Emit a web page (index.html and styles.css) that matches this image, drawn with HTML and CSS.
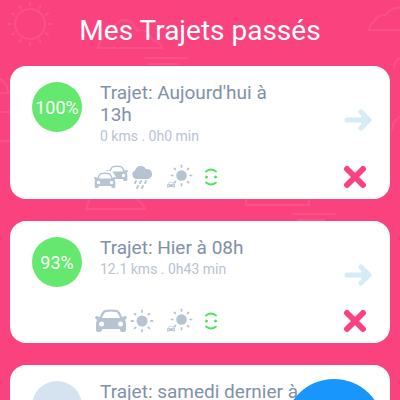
FILE: index.html
```html
<!DOCTYPE html>
<html lang="fr">
<head>
<meta charset="utf-8">
<meta name="viewport" content="width=device-width, initial-scale=1">
<title>Mes Trajets passés</title>
<link rel="stylesheet" href="styles.css">
</head>
<body>
<svg class="defs" aria-hidden="true">
  <symbol id="car" viewBox="0 0 32 24">
    <path fill="currentColor" fill-rule="evenodd" d="M0 9Q0 7 2 7L5 8Q7 2 10 1Q16 0 22 1Q25 2 27 8L30 7Q32 7 32 9L30 11Q31 13 31 15V21Q31 23 29 23H27Q25 23 25 20H7Q7 23 5 23H3Q1 23 1 21V15Q1 13 2 11ZM7 9H25Q23 3 21 3Q16 2 11 3Q9 3 7 9ZM6.500 12.500A2.500 2.500 0 1 0 6.500 17.500A2.500 2.500 0 1 0 6.500 12.500ZM25.500 12.500A2.500 2.500 0 1 0 25.500 17.500A2.500 2.500 0 1 0 25.500 12.500Z"/>
  </symbol>
  <symbol id="sun" viewBox="0 0 24 24">
    <circle cx="12" cy="12" r="5.500" fill="currentColor"/>
    <path fill="none" stroke="currentColor" stroke-width="1.800" stroke-linecap="round" d="M12 1.500V3M12 21V22.500M1.500 12H3M21 12H22.500M4.600 4.600L5.600 5.600M18.400 18.400L19.400 19.400M4.600 19.400L5.600 18.400M18.400 5.600L19.400 4.600"/>
  </symbol>
  <symbol id="suncar" viewBox="0 0 28 26">
    <use href="#sun" x="4" y="0" width="23" height="23"/>
    <use href="#car" x="1" y="18" width="8" height="6"/>
  </symbol>
  <symbol id="traffic" viewBox="0 0 34 24">
    <use href="#car" x="12" y="0" width="22" height="17"/>
    <path fill="#fff" d="M0 13L4 6H18L22 12V24H0Z"/>
    <use href="#car" x="0" y="7" width="22" height="17"/>
  </symbol>
  <symbol id="rain" viewBox="0 0 22 24">
    <path fill="currentColor" d="M5 14A4.500 4.500 0 0 1 4 5.500A6 6 0 0 1 15 4A5 5 0 0 1 17 14Z"/>
    <path fill="none" stroke="currentColor" stroke-width="1.800" stroke-linecap="round" d="M5 16L4 18M10 16L9 18M15 16L14 18M7 21L6 23M12 21L11 23"/>
  </symbol>
  <symbol id="face" viewBox="0 0 14 20">
    <path fill="none" stroke="currentColor" stroke-width="1.800" stroke-linecap="round" d="M2 4.500Q7 .5 12 4.500M2 15.500Q7 19.500 12 15.500"/>
    <circle cx="2.500" cy="10" r="1.500" fill="currentColor"/><circle cx="11.500" cy="10" r="1.500" fill="currentColor"/>
  </symbol>
  <symbol id="arrow" viewBox="0 0 28 24">
    <path fill="none" stroke="currentColor" stroke-width="5" stroke-linecap="round" stroke-linejoin="round" d="M3 12H24M17 4L25 12L17 20"/>
    <path fill="currentColor" d="M17 8L25 12L17 16Z"/>
  </symbol>
  <symbol id="cross" viewBox="0 0 24 24">
    <path fill="none" stroke="currentColor" stroke-width="6" stroke-linecap="round" d="M4 4L20 20M20 4L4 20"/>
  </symbol>
</svg>

<svg class="sky" viewBox="0 0 400 400" preserveAspectRatio="xMidYMin slice" aria-hidden="true">
  <circle cx="30" cy="24" r="15"/>
  <path d="M30 2V6M30 42V46M8 24H12M48 24H52M19 5L21 9M41 5L39 9M19 43L21 39M41 43L39 39M11 13L15 15M49 13L45 15M11 35L15 33M49 35L45 33"/>
  <path d="M98 48H162Q160 41 152 40Q147 27 137 31Q132 17 120 21Q112 25 112 35Q100 36 98 48ZM144 58H188M148 64H178"/>
  <path d="M400 8Q392 6 386 15Q377 14 374 22Q370 23 369 30H400M400 117Q393 120 392 130M400 58Q394 61 394 68"/>
  <path d="M0 79Q7 82 8 93H0M0 112H10M0 141H10M90 198L86 209H145Q143 203 136 199M246 199V205H309V199M292 214H336M297 220H325"/>
</svg>

<header class="header"><h1 class="title">Mes Trajets passés</h1></header>

<main class="trips">
  <article class="card">
    <div class="summary">
      <span class="score">100%</span>
      <div class="info">
        <h2 class="name">Trajet: Aujourd'hui à 13h</h2>
        <p class="meta">0 kms . 0h0 min</p>
      </div>
      <button class="open" type="button" aria-label="Ouvrir"><svg class="arrow"><use href="#arrow"/></svg></button>
    </div>
    <div class="conditions">
      <div class="icons">
        <svg class="wide"><use href="#traffic"/></svg>
        <svg class="weather"><use href="#rain"/></svg>
        <svg class="suncar"><use href="#suncar"/></svg>
        <svg class="face"><use href="#face"/></svg>
      </div>
      <button class="remove" type="button" aria-label="Supprimer"><svg class="cross"><use href="#cross"/></svg></button>
    </div>
  </article>

  <article class="card">
    <div class="summary">
      <span class="score">93%</span>
      <div class="info">
        <h2 class="name">Trajet: Hier à 08h</h2>
        <p class="meta">12.1 kms . 0h43 min</p>
      </div>
      <button class="open" type="button" aria-label="Ouvrir"><svg class="arrow"><use href="#arrow"/></svg></button>
    </div>
    <div class="conditions">
      <div class="icons">
        <svg class="wide"><use href="#car"/></svg>
        <svg class="weather"><use href="#sun"/></svg>
        <svg class="suncar"><use href="#suncar"/></svg>
        <svg class="face"><use href="#face"/></svg>
      </div>
      <button class="remove" type="button" aria-label="Supprimer"><svg class="cross"><use href="#cross"/></svg></button>
    </div>
  </article>

  <article class="card">
    <div class="summary">
      <span class="score pending"></span>
      <div class="info">
        <h2 class="name">Trajet: samedi dernier à</h2>
      </div>
    </div>
  </article>
</main>

<button class="fab" type="button" aria-label="Nouveau trajet"></button>
</body>
</html>
```
FILE: styles.css
```css
* {
  box-sizing: border-box;
}

html {
  height: 100%;
  overflow: hidden;
}

body {
  height: 100%;
  margin: 0;
  overflow: hidden;
  background: #fa437e;
  font-family: Roboto, "Liberation Sans", sans-serif;
}

button {
  padding: 0;
  border: 0;
  background: none;
  cursor: pointer;
}

svg {
  display: block;
}

.defs {
  position: absolute;
  width: 0;
  height: 0;
}

.sky {
  position: absolute;
  z-index: -1;
  top: 0;
  left: 0;
  width: 100%;
  height: 100%;
  fill: none;
  stroke: #fff;
  stroke-width: 2;
  stroke-opacity: 0.08;
}

.header {
  padding: 15px 10px 19px;
}

.title {
  margin: 0;
  color: #fff;
  font-size: 28px;
  font-weight: 400;
  line-height: 32px;
  text-align: center;
}

.trips {
  display: flex;
  flex-direction: column;
  gap: 22px;
  padding: 0 10px;
}

.card {
  padding: 16px 18px 7px 22px;
  border-radius: 16px;
  background: #fff;
}

.summary {
  display: flex;
  min-height: 53px;
}

.score {
  display: flex;
  flex: none;
  align-items: center;
  justify-content: center;
  width: 50px;
  height: 50px;
  border-radius: 50%;
  background: #64e86e;
  color: #fff;
  font-size: 18px;
}

.pending {
  background: #d5e2f0;
}

.info {
  flex: 1;
  margin: 0 50px 0 18px;
}

.name {
  margin: 0;
  color: #8091a9;
  font-size: 19px;
  font-weight: 400;
  line-height: 22px;
}

.meta {
  margin: 0;
  color: #b9c3d1;
  font-size: 14px;
  line-height: 20px;
}

.open {
  align-self: flex-start;
  margin-top: 26px;
  color: #d6ebf8;
}

.arrow {
  width: 28px;
  height: 24px;
}

.conditions {
  display: flex;
  align-items: center;
  justify-content: space-between;
  height: 30px;
  margin-top: 16px;
  padding: 0 5px 0 62px;
}

.icons {
  display: flex;
  align-items: center;
  color: #b5c3d3;
}

.wide {
  width: 34px;
  height: 24px;
}

.weather {
  width: 24px;
  height: 24px;
  margin-left: 2px;
}

.suncar {
  width: 28px;
  height: 26px;
  margin-left: 12px;
}

.face {
  width: 14px;
  height: 20px;
  margin-left: 10px;
  color: #4fe35b;
}

.remove {
  color: #fa437e;
}

.cross {
  width: 24px;
  height: 24px;
}

.fab {
  position: fixed;
  right: 16px;
  bottom: -79px;
  width: 100px;
  height: 100px;
  border-radius: 50%;
  background: #1996fb;
}
```
